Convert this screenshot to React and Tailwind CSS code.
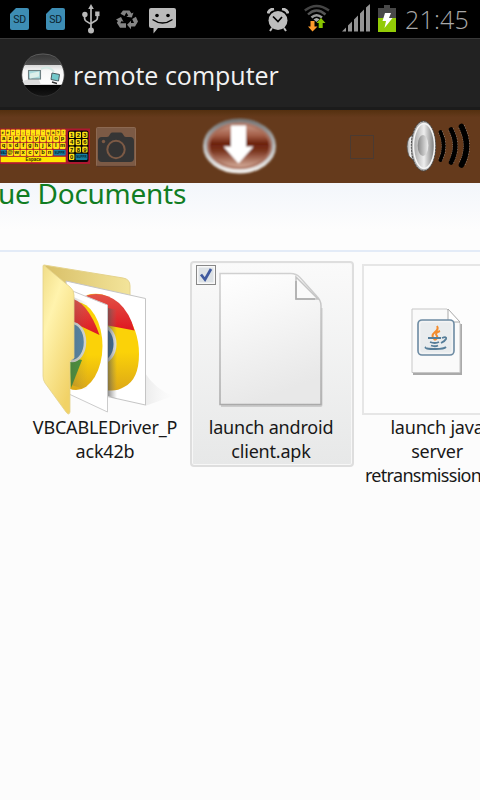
import React from "react";

const sans = "font-['Noto_Sans','Open_Sans',sans-serif]";

function SdCard() {
  return (
    <svg width="20" height="22" viewBox="0 0 20 22">
      <path d="M6 0H17a2 2 0 0 1 2 2V20a2 2 0 0 1-2 2H2a2 2 0 0 1-2-2V6Z" fill="#3d8db4" />
      <text x="9.7" y="15" fontSize="10.5" textAnchor="middle" fill="#0c2430" fontFamily="Roboto, sans-serif">SD</text>
    </svg>
  );
}

function Usb() {
  return (
    <svg width="18" height="30" viewBox="0 0 18 30" fill="none" stroke="#b8b8b8" strokeWidth="1.7">
      <path d="M9 4V26M2.6 10v4.5q0 1.6 1.5 2.6l4.9 3M15.4 9v5q0 1.6-1.5 2.6L9 19.5" />
      <path d="M9 0l2.8 5H6.2Z" fill="#b8b8b8" stroke="none" />
      <circle cx="2.9" cy="10.5" r="2.7" fill="#b8b8b8" stroke="none" />
      <rect x="13.2" y="7.5" width="4.3" height="4.6" fill="#b8b8b8" stroke="none" />
      <circle cx="9" cy="26.5" r="3" fill="#b8b8b8" stroke="none" />
    </svg>
  );
}

function Recycle() {
  return (
    <svg width="22" height="20" viewBox="0 0 22 20" fill="#858585">
      <path d="M7 0.5h6.5l2 3 2-1-1.700 5-5.500-.7 2-1.200-2-3L8.500 6 4.500 3.700Z" />
      <path d="M16.200 9l3.700-2.200L22 11.500 19 16.500h-4v2.700l-4-4.500 4-4v2.300h3Z" />
      <path d="M0 9.500 5 7l2.600 5-2-1-1.300 2.200H10v4.500H4L.8 12.800 2 11Z" />
    </svg>
  );
}

function Message() {
  return (
    <svg width="28" height="26" viewBox="0 0 28 26">
      <path d="M2 0H25a2 2 0 0 1 2 2V18a2 2 0 0 1-2 2H9L4.500 25.500V20H2a2 2 0 0 1-2-2V2a2 2 0 0 1 2-2Z" fill="#bababa" />
      <circle cx="8" cy="7.500" r="1.800" />
      <circle cx="19" cy="7.500" r="1.800" />
      <path d="M3.500 11.500q10 7 20 0" fill="none" stroke="#000" strokeWidth="1.500" />
    </svg>
  );
}

function Alarm() {
  return (
    <svg width="22" height="24" viewBox="0 0 22 24">
      <path d="M1 5.500Q2 1.500 7 .8M21 5.500Q20 1.500 15 .8" fill="none" stroke="#bdbdbd" strokeWidth="3" />
      <path d="M5 20l-2 3M17 20l2 3" stroke="#bdbdbd" strokeWidth="2" />
      <circle cx="11" cy="12.500" r="9.500" fill="#bdbdbd" />
      <path d="M6 8.500l5 5 4-4.500" fill="none" stroke="#000" strokeWidth="1.700" />
    </svg>
  );
}

function Wifi() {
  return (
    <svg width="26" height="28" viewBox="0 0 26 28">
      <g fill="none" strokeWidth="2.400">
        <path d="M.8 6.500Q12.500-2.500 25 6.500" stroke="#444" />
        <path d="M4 10.500Q12.500 2.500 21.500 10.500" stroke="#555" />
        <path d="M7.500 13.500Q12.500 9 18 13.500" stroke="#999" />
      </g>
      <path d="M9.500 15.500Q12.500 12.500 15.500 15.500L12.500 18Z" fill="#aaa" />
      <path d="M6.500 17h4v5.500h3L8.500 27.500 4 22.500h2.500Z" fill="#ff9b2c" />
      <path d="M17 14l4.500 5H18.700v5h-4v-5H12.500Z" fill="#88c400" />
    </svg>
  );
}

function Signal() {
  return (
    <svg width="28" height="28" viewBox="0 0 28 28" fill="#949494">
      <path d="M0 27.500 4 23.500v4ZM6 21.500l4-4v10H6ZM12 15.500l4-4v16h-4ZM18 9.500l4-4v22h-4ZM24 3.500 28 0v27.500h-4Z" />
    </svg>
  );
}

function Battery() {
  return (
    <svg width="18" height="27" viewBox="0 0 18 27">
      <path d="M6 0h6v3h6v10H0V3h6Z" fill="#484848" />
      <path d="M0 13h18v14H0Z" fill="#92cb06" />
      <path d="M7 8h6l-2 5h3.500L6.500 23l1.500-7H4.500Z" fill="#fff" />
    </svg>
  );
}

function AppLogo() {
  return (
    <svg width="44" height="44" viewBox="0 0 44 44">
      <defs>
        <linearGradient id="orb" x1="0" y1="0" x2="0" y2="1">
          <stop offset="0" stopColor="#333" />
          <stop offset=".26" stopColor="#505050" />
          <stop offset=".27" stopColor="#d8d8d8" />
          <stop offset=".4" stopColor="#f8f8f8" />
          <stop offset=".72" stopColor="#fff" />
          <stop offset=".74" stopColor="#050505" />
          <stop offset="1" stopColor="#161616" />
        </linearGradient>
      </defs>
      <circle cx="22" cy="22" r="21.300" fill="url(#orb)" stroke="#333" strokeWidth=".8" />
      <path d="M3 13Q7 1 22 1t19 12" fill="none" stroke="#777" strokeWidth=".6" />
      <path d="M1.500 28 12 25l5-1 3 8H4Z" fill="#dedede" />
      <path d="M20 16q8-4 13 3" fill="none" stroke="#d3e9e4" strokeWidth="2" />
      <rect x="7.500" y="17.500" width="12" height="8.500" fill="#a9d8dc" stroke="#6f8083" strokeWidth="1.100" />
      <path d="M9 20.500l9-2v5l-9 2Z" fill="#ddefeb" />
      <path d="M31 20l7.500 1.500-1 6.500-7.500-1.500Z" fill="#73c9cb" stroke="#4b5b60" />
      <path d="M31 29l5 1.500" stroke="#333" strokeWidth="1.500" />
    </svg>
  );
}

const keyRows = [
  { y: 1.500, keys: "éè\"-;.,_'çà?!", size: 5.200 },
  { y: 7.700, keys: "azertyuiop", size: 6.700 },
  { y: 14.700, keys: "qsdfghjklm", size: 6.700 },
  { y: 21.700, keys: "@wxcvbn", size: 6.700, start: 7.200 },
];

function Keyboard() {
  return (
    <svg className="shrink-0" width="90" height="37" viewBox="0 0 90 37" fontFamily="Liberation Sans, sans-serif" fontWeight="bold" textAnchor="middle">
      <rect y="0.500" width="90" height="35.500" fill="#ad1830" />
      {keyRows.map((row) => {
        const pitch = row.start ? 6.600 : 65.500 / row.keys.length;
        return Array.from(row.keys).map((key, i) => {
          const x = (row.start || 0.700) + i * pitch;
          return (
            <g key={key + row.y}>
              <rect x={x} y={row.y} width={pitch - 0.600} height="6.200" rx=".8" fill="#ffe313" />
              <text x={x + (pitch - 1) / 2} y={row.y + 4.700} fontSize={row.size - 1} fill="#211900">{key}</text>
            </g>
          );
        });
      })}
      <rect x=".5" y="21.700" width="6" height="5.700" rx="1" fill="#167fa0" />
      <rect x="53.500" y="21.700" width="12.200" height="5.700" rx="1" fill="#167fa0" />
      <text x="3.500" y="25.800" fontSize="3" fill="#06222d">MAJ</text>
      <text x="59.600" y="25.800" fontSize="3" fill="#06222d">SUPPR</text>
      <rect x=".7" y="28.800" width="65" height="5.400" fill="#ffe600" />
      <text x="33.500" y="33.200" fontSize="4.500" fill="#332800">Espace</text>
      <rect x="68" y="2.500" width="20.500" height="31.500" rx="2" fill="#080507" />
      {Array.from("1234567890").map((n, i) => {
        const x = 69 + (i % 3) * 6.600;
        const y = 3.800 + Math.floor(i / 3) * 7.300;
        return (
          <g key={n}>
            <rect x={x} y={y} width="5.400" height="6.200" rx="1" fill="#ffe313" />
            <text x={x + 2.700} y={y + 5.200} fontSize="5.800" fill="#171200">{n}</text>
          </g>
        );
      })}
      <rect x="75.500" y="25.700" width="12" height="6.200" rx="1" fill="#167fa0" />
      <text x="81.500" y="30" fontSize="3" fill="#06222d">SUPPR</text>
    </svg>
  );
}

function Camera() {
  return (
    <svg width="40" height="40" viewBox="0 0 40 40">
      <rect x=".5" y=".5" width="39" height="38.500" rx="1" fill="#7c5a45" stroke="#8c6952" />
      <path d="M1 39.300h38" stroke="#4f3121" strokeWidth="1" />
      <path d="M6 10h5q2 0 2.500-2l1-1.500q.5-1 2-1h8q1.500 0 2 1l1 1.500q.5 2 2.500 2H34q4 0 4 4v17q0 4-4 4H6q-4 0-4-4V14q0-4 4-4Z" fill="#353535" />
      <circle cx="20" cy="22.500" r="8.700" fill="#333" stroke="#7c5a45" strokeWidth="2" />
      <circle cx="7.500" cy="14.500" r="1.700" fill="#7c5a45" />
    </svg>
  );
}

function DownloadButton() {
  return (
    <svg width="78" height="60" viewBox="0 0 78 60">
      <defs>
        <linearGradient id="ring" x1="0" y1="0" x2="0" y2="1">
          <stop offset="0" stopColor="#777" />
          <stop offset=".5" stopColor="#b9b9b9" />
          <stop offset="1" stopColor="#f1efed" />
        </linearGradient>
        <linearGradient id="rust" x1="0" y1="0" x2="0" y2="1">
          <stop offset="0" stopColor="#d4aea0" />
          <stop offset=".3" stopColor="#a25c44" />
          <stop offset=".45" stopColor="#6c210d" />
          <stop offset=".6" stopColor="#7b3520" />
          <stop offset="1" stopColor="#edcbb9" />
        </linearGradient>
        <filter id="soft"><feGaussianBlur stdDeviation="1" /></filter>
      </defs>
      <g filter="url(#soft)">
        <ellipse cx="38.500" cy="29" rx="34.500" ry="25.500" fill="url(#rust)" stroke="url(#ring)" strokeWidth="4" />
        <ellipse cx="38.500" cy="29" rx="31" ry="22" fill="none" stroke="#a7705d" strokeWidth="2" />
        <path d="M30 8.500h15v21h7.500L37.500 46.500 22.500 29.500h7.500Z" fill="#fff" />
      </g>
    </svg>
  );
}

function Speaker() {
  return (
    <svg width="66" height="54" viewBox="0 0 66 54">
      <defs>
        <linearGradient id="cone">
          <stop stopColor="#a5a5a5" />
          <stop offset=".5" stopColor="#eee" />
          <stop offset="1" stopColor="#777" />
        </linearGradient>
        <linearGradient id="cap"><stop stopColor="#888" /><stop offset="1" stopColor="#eee" /></linearGradient>
      </defs>
      <path d="M8 13.500 3 18q-4 8 0 18l5 5Z" fill="url(#cone)" stroke="#555" strokeWidth=".7" />
      <ellipse cx="17.500" cy="26" rx="12.200" ry="25" fill="#aaa" stroke="#444" strokeWidth="1" strokeDasharray="2 1" />
      <ellipse cx="18" cy="26" rx="10.500" ry="22.500" fill="url(#cone)" stroke="#f4f4f4" strokeWidth="1.500" />
      <ellipse cx="17" cy="25.500" rx="5.300" ry="10.500" fill="url(#cap)" />
      {["M34.500 12q6.500 14 0 28", "M45 9.500q8.500 16 0 33", "M55.500 6.500q10 19.500 0 38.500"].map((d, i) => (
        <g key={d} fill="none" strokeLinecap="round">
          <path d={d} stroke="#b0a39b" strokeWidth={i + 4.600} strokeDasharray="1 1.500" strokeLinecap="butt" />
          <path d={d} stroke="#000" strokeWidth={i * 0.900 + 3.800} />
        </g>
      ))}
    </svg>
  );
}

function Folder() {
  return (
    <svg className="ml-5 self-start" width="140" height="157" viewBox="0 0 140 157">
      <defs>
        <linearGradient id="flap" x1="0" y1="0" x2=".6" y2="1">
          <stop stopColor="#f1dd88" />
          <stop offset=".35" stopColor="#fff3ad" />
          <stop offset="1" stopColor="#f1d267" />
        </linearGradient>
        <linearGradient id="back"><stop stopColor="#d8bf67" /><stop offset="1" stopColor="#f3e49a" /></linearGradient>
        <linearGradient id="yel" x1="0" y1="0" x2="0" y2="1"><stop offset=".6" stopColor="#fbd208" /><stop offset="1" stopColor="#dda817" /></linearGradient>
        <linearGradient id="red" x1="0" y1="0" x2="0" y2="1"><stop stopColor="#e25347" /><stop offset="1" stopColor="#df1720" /></linearGradient>
        <linearGradient id="fold"><stop stopColor="#555" stopOpacity=".65" /><stop offset="1" stopColor="#777" stopOpacity="0" /></linearGradient>
        <linearGradient id="cast"><stop stopColor="#bbb" stopOpacity=".25" /><stop offset="1" stopColor="#ddd" stopOpacity="0" /></linearGradient>
        <clipPath id="front"><path d="M29 34 68 51V157L29 145Z" /></clipPath>
      </defs>
      <path d="M105 115q10 16 28 23l-28 10Z" fill="url(#cast)" />
      <path d="M4 7 83 20q7 1 7 8v24L31 44Z" fill="url(#back)" stroke="#e5d38c" />
      <path d="M26 23 105.500 40.500V147L65 138 30 130Z" fill="#fff" stroke="#c5c5c5" />
      <path d="M47 37Q67 31 83 52q16 19 16 44 0 26-15 33-8 5-18 3Z" fill="url(#yel)" />
      <path d="M45 38Q63 32 79 45q11 10 15.500 27.500L60 66Z" fill="url(#red)" />
      <ellipse cx="61" cy="86" rx="14" ry="18.500" fill="#2a639a" stroke="#e2e5e5" strokeWidth="3" />
      <path d="M68 50l9 2v89l-9-3Z" fill="url(#fold)" />
      <path d="M30 32 67.500 47V154L29 136Z" fill="#fff" stroke="#ccc" />
      <g clipPath="url(#front)">
        <ellipse cx="36" cy="88" rx="26.500" ry="44" fill="url(#yel)" />
        <path d="M29 40Q47 42 59.500 77L34 65Z" fill="url(#red)" />
        <path d="M29 99 42 102 31 130Z" fill="#479337" />
        <ellipse cx="32" cy="84" rx="13" ry="19" fill="#5384a5" stroke="#d4d7d1" strokeWidth="2.500" />
      </g>
      <path d="M31 38l17 7v87l-17-5Z" fill="url(#fold)" opacity=".4" />
      <path d="M3.500 7 30 29q4 3 4 8v63l-4 3v51q-1 4-4 0L5 125q-2-3-2-7V8Z" fill="url(#flap)" stroke="#e3d28c" strokeWidth=".8" />
    </svg>
  );
}

function BlankFile() {
  return (
    <svg className="shrink-0" width="106" height="136" viewBox="0 0 106 136">
      <defs>
        <linearGradient id="paper" x1="0" y1="0" x2=".3" y2="1"><stop stopColor="#fff" /><stop offset=".35" stopColor="#f8f8f8" /><stop offset="1" stopColor="#e8e8e8" /></linearGradient>
        <linearGradient id="edge" x1="0" y1="0" x2="0" y2="1"><stop stopColor="#d0d0d0" /><stop offset="1" stopColor="#aaa" /></linearGradient>
      </defs>
      <path d="M3 134h99.500q1 0 1-1V36" fill="none" stroke="#ccc" strokeWidth="2" />
      <path d="M2 1.500h71q5 0 9 4l17 19q4 4 4 9v99H2Z" fill="url(#paper)" stroke="url(#edge)" strokeWidth="1.500" />
      <path d="M78 5v22h22Z" fill="#fafafa" stroke="#c4c4c4" strokeWidth="1.500" />
      <path d="M78 9v18h19" fill="none" stroke="#aaa" strokeWidth="1.500" />
    </svg>
  );
}

function JavaFile() {
  return (
    <svg width="52" height="68" viewBox="0 0 52 68">
      <path d="M2 66h48V16" fill="none" stroke="#aaa" strokeWidth="2" />
      <path d="M1 1h35l13 14v49.500H1Z" fill="#fafafa" stroke="#c7c7c7" />
      <path d="M37 1v13h12Z" fill="#fff" stroke="#aaa" />
      <rect x="7" y="12" width="36" height="35" rx="4" fill="#e9ecee" stroke="#6d8ba3" strokeWidth="1.600" />
      <rect x="8.800" y="13.800" width="32.400" height="31.400" rx="2.500" fill="none" stroke="#f8f8f8" />
      <path d="M26 18q2 3-2 6-5 4 0 8M29 23q-6 2-3 5 1 2-2 4" fill="none" stroke="#f38c2e" strokeWidth="2" />
      <path d="M17 30h13M19 34q5 2 9 0M20 37.500q4 1.500 7 0M31 30q5-2 4 1-1 2-5 4M15 39q-3 2 10 2 8 0 10-2" fill="none" stroke="#557d99" strokeWidth="1.800" />
    </svg>
  );
}

function FileLabel({ children }) {
  return <div className="whitespace-nowrap text-center text-[18px] leading-6 tracking-[-0.2px] text-[#181818]">{children}</div>;
}

export default function App() {
  return (
    <main className={`flex h-[800px] w-[480px] flex-col overflow-hidden bg-[#fcfcfc] ${sans}`}>
      <div className="flex h-[38px] shrink-0 items-start bg-black">
        <div className="ml-[10px] mt-2"><SdCard /></div>
        <div className="ml-4 mt-2"><SdCard /></div>
        <div className="ml-4 mt-1"><Usb /></div>
        <div className="ml-4 mt-[10px]"><Recycle /></div>
        <div className="ml-[11px] mt-2"><Message /></div>
        <div className="ml-[90px] mt-2"><Alarm /></div>
        <div className="ml-[15px] mt-1"><Wifi /></div>
        <div className="ml-3 mt-1"><Signal /></div>
        <div className="ml-2 mt-[5px]"><Battery /></div>
        <div className="ml-[9px] mt-[3px] font-['Open_Sans',sans-serif] text-[25px] font-light leading-8 tracking-[0.2px] text-[#a8a8a8]">21:45</div>
      </div>

      <header className="flex h-[72px] shrink-0 items-center border-b-[3px] border-t border-b-[#1b1b1b] border-t-[#383838] bg-[#222] pl-[21px]">
        <div className="mt-[3px]"><AppLogo /></div>
        <h1 className="ml-2 mt-1 whitespace-nowrap font-['Open_Sans',sans-serif] text-[25px] leading-8 text-[#f2f2f2]">remote computer</h1>
      </header>

      <div className="flex h-[73px] shrink-0 items-center bg-[#653a1c] bg-gradient-to-b from-[#54300f] from-0% to-[#653a1c] to-10%">
        <Keyboard />
        <div className="ml-[6px]"><Camera /></div>
        <div className="ml-[65px]"><DownloadButton /></div>
        <div className="ml-[71px] h-6 w-6 border border-[#4b3a31]" />
        <div className="ml-8"><Speaker /></div>
      </div>

      <section className="flex min-h-0 flex-1 flex-col overflow-hidden">
        <div className="h-[69px] shrink-0 border-b-2 border-[#e3ebf7] bg-gradient-to-b from-[#f3f6fb] to-[#fdfdfd] to-70%">
          <h2 className="-ml-[2px] -mt-[10px] whitespace-nowrap text-[28px] leading-10 tracking-[-0.27px] text-[#117d23]">ue Documents</h2>
        </div>

        <div className="flex items-start">
          <div className="ml-5 flex w-[170px] shrink-0 flex-col items-center pt-[6px]">
            <Folder />
            <FileLabel>VBCABLEDriver_P<br />ack42b</FileLabel>
          </div>

          <div className="relative mt-[9px] flex h-[206px] w-[164px] shrink-0 flex-col items-center rounded border-2 border-[#dedede] bg-gradient-to-b from-[#fafafa] to-[#e7e8e8] pr-[2px] pt-[9px] shadow-[inset_0_0_0_1px_#f7f7f7]">
            <div className="absolute left-1 top-[2px] flex h-5 w-5 items-center justify-center border border-[#888] bg-[#f8f8f8]">
              <svg width="16" height="16" viewBox="0 0 16 16">
                <rect x=".5" y=".5" width="15" height="15" fill="#dde2e6" />
                <path d="M3 7.500l4 5L13 2" fill="none" stroke="#405a9f" strokeWidth="2.700" />
              </svg>
            </div>
            <BlankFile />
            <div className="mt-[7px]"><FileLabel>launch android<br />client.apk</FileLabel></div>
          </div>

          <div className="ml-2 mt-3 flex w-[150px] shrink-0 flex-col items-center">
            <div className="flex h-[151px] w-[150px] items-center justify-center border-2 border-[#e6e6e6] bg-[#fdfdfd] pt-1"><JavaFile /></div>
            <FileLabel>launch java<br />server</FileLabel>
            <div className="ml-[3px] self-start whitespace-nowrap text-[18px] leading-6 tracking-[-0.7px] text-[#181818]">retransmission</div>
          </div>
        </div>
      </section>
    </main>
  );
}
